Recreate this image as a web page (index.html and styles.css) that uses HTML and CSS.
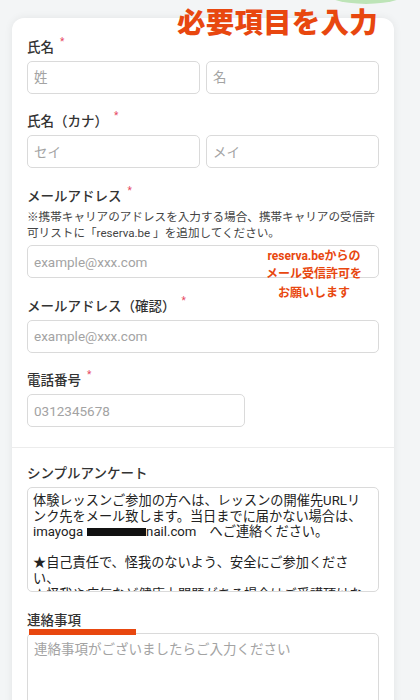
FILE: index.html
```html
<!DOCTYPE html>
<html lang="ja">
<head>
    <meta charset="UTF-8">
    <meta name="viewport" content="width=device-width, initial-scale=1.0">
    <title>予約フォーム</title>
    <link rel="stylesheet" href="styles.css">
</head>
<body>
    <div class="blob"></div>
    <div class="headline">必要項目を入力</div>

    <div class="card">
        <!-- 基本情報 -->
        <div class="section">
            <div class="field">
                <div class="label">氏名<span class="req">*</span></div>
                <div class="row">
                    <input class="input" type="text" placeholder="姓">
                    <input class="input" type="text" placeholder="名">
                </div>
            </div>

            <div class="field">
                <div class="label">氏名（カナ）<span class="req">*</span></div>
                <div class="row">
                    <input class="input" type="text" placeholder="セイ">
                    <input class="input" type="text" placeholder="メイ">
                </div>
            </div>

            <div class="field">
                <div class="label">メールアドレス<span class="req">*</span></div>
                <p class="note">※携帯キャリアのアドレスを入力する場合、携帯キャリアの受信許可リストに「reserva.be 」を追加してください。</p>
                <input class="input" type="email" placeholder="example@xxx.com">
            </div>

            <div class="field">
                <div class="label">メールアドレス（確認）<span class="req">*</span></div>
                <input class="input" type="email" placeholder="example@xxx.com">
            </div>

            <div class="field">
                <div class="label">電話番号<span class="req">*</span></div>
                <input class="input input-tel" type="tel" placeholder="0312345678">
            </div>
        </div>

        <!-- アンケート -->
        <div class="section section-survey">
            <div class="field">
                <div class="label">シンプルアンケート</div>
                <div class="survey-box">体験レッスンご参加の方へは、レッスンの開催先URLリンク先をメール致します。当日までに届かない場合は、imayoga<span class="redact"></span>nail.com&nbsp;&nbsp;&nbsp;&nbsp;へご連絡ください。<br><br>★自己責任で、怪我のないよう、安全にご参加ください、<br>★怪我や病気など健康上問題がある場合はご受講頂けないことがあります。</div>
            </div>

            <div class="field field-memo">
                <div class="label">連絡事項</div>
                <span class="marker"></span>
                <textarea class="input memo" placeholder="連絡事項がございましたらご入力ください"></textarea>
            </div>
        </div>

        <div class="callout">reserva.beからの<br>メール受信許可を<br>お願いします</div>
    </div>
</body>
</html>
```

FILE: styles.css
```css
/* 予約フォーム */
body {
    margin: 0;
    padding: 18px 0 0;
    position: relative;
    overflow: hidden;
    background: #f3f5f6;
    font-family: Roboto, "Noto Sans CJK JP", sans-serif;
    color: #333;
}

.blob {
    position: absolute;
    top: -26px;
    left: 321px;
    width: 90px;
    height: 30px;
    border-radius: 50%;
    background: #bde4b7;
}

.headline {
    position: absolute;
    top: 7px;
    left: 177px;
    z-index: 5;
    font-size: 28.5px;
    line-height: 34px;
    font-weight: 900;
    color: #e8470f;
    letter-spacing: 0.2px;
}

.card {
    position: relative;
    width: 382px;
    margin-left: 12px;
    background: #fff;
    border-radius: 12px 12px 0 0;
    box-shadow: 0 0 8px rgba(0, 0, 0, 0.07);
}

.section {
    padding: 18.5px 15px 20px;
}

.section-survey {
    border-top: 1px solid #ececec;
    padding-top: 15px;
}

.field {
    position: relative;
    margin-bottom: 17.5px;
}

.field:last-child {
    margin-bottom: 0;
}

.label {
    font-size: 13.5px;
    line-height: 20px;
    font-weight: 500;
    color: #333;
    margin-bottom: 4px;
}

.req {
    display: inline-block;
    vertical-align: top;
    margin-left: 6px;
    font-size: 10px;
    line-height: 10px;
    font-weight: 400;
    color: #e6485f;
}

.row {
    display: grid;
    grid-template-columns: 1fr 1fr;
    gap: 6px;
}

.input {
    display: block;
    width: 100%;
    height: 33px;
    box-sizing: border-box;
    margin: 0;
    padding: 0 6px;
    border: 1px solid #dadada;
    border-radius: 5px;
    background: #fff;
    font-family: Roboto, "Noto Sans CJK JP", sans-serif;
    font-size: 13.5px;
    color: #333;
}

.input::placeholder {
    color: #a3a3a3;
}

.input-tel {
    width: 218px;
}

.note {
    margin: -1px 0 3px;
    font-size: 11.6px;
    line-height: 16.8px;
    color: #444;
}

.callout {
    position: absolute;
    top: 229px;
    left: 242px;
    width: 120px;
    text-align: center;
    font-size: 12px;
    line-height: 18.3px;
    font-weight: 700;
    color: #e8470f;
}

.survey-box {
    height: 105px;
    box-sizing: border-box;
    overflow: hidden;
    padding: 5px 8px 5px 5px;
    border: 1px solid #dadada;
    border-radius: 5px;
    font-size: 13.2px;
    line-height: 15.6px;
    color: #222;
}

.redact {
    display: inline-block;
    width: 59px;
    height: 8px;
    margin-left: 4px;
    background: #111;
}

.field-memo .label {
    margin-bottom: 3px;
}

.marker {
    position: absolute;
    top: 19px;
    left: 2px;
    width: 107px;
    height: 6px;
    background: #e8470f;
}

.memo {
    height: 120px;
    padding: 5px 6px;
    line-height: 20px;
    resize: none;
}
```
